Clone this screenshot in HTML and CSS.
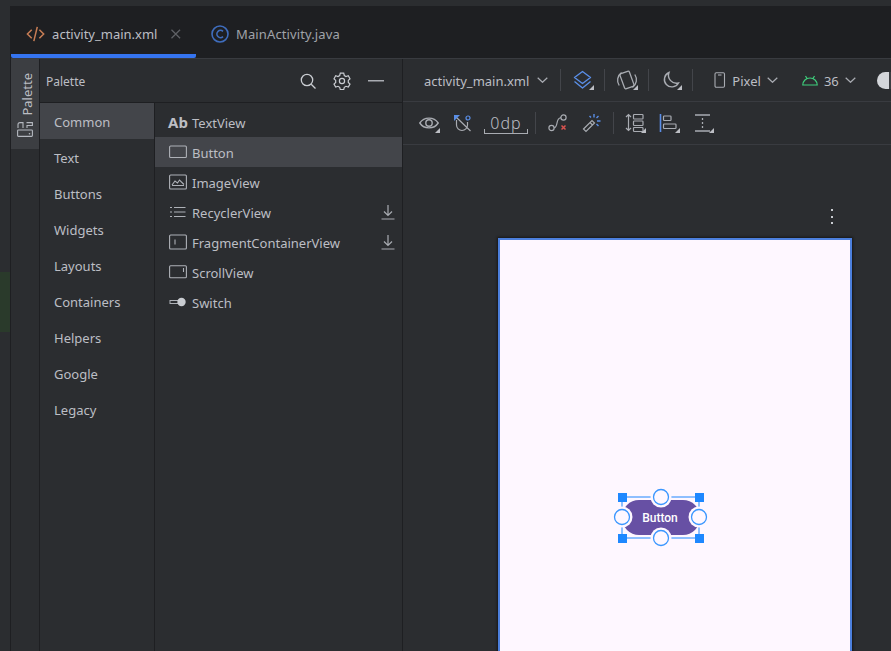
FILE: index.html
```html
<!DOCTYPE html>
<html lang="en">
<head>
    <meta charset="UTF-8">
    <meta name="viewport" content="width=device-width, initial-scale=1.0">
    <title>activity_main.xml</title>
    <link rel="stylesheet" href="styles.css">
</head>
<body>
    <div class="top-strip"></div>
    <div class="main">
        <div class="gutter"><div class="gutter-mark"></div></div>
        <div class="editor">
            <div class="tabs">
                <div class="tab active">
                    <svg class="tab-icon" width="20" height="16" viewBox="0 0 20 16" fill="none" stroke="#c77d55" stroke-width="1.6"><path d="M6 3.500 1.500 8 6 12.500M14 3.500 18.500 8 14 12.500M11.800 .5 8.200 15.500"/></svg>
                    <span>activity_main.xml</span>
                    <svg class="tab-close" width="10" height="10" viewBox="0 0 10 10" stroke="#5f6166" stroke-width="1.300"><path d="M.5.5l9 9M9.500.5l-9 9"/></svg>
                </div>
                <div class="tab">
                    <svg class="tab-icon" width="18" height="18" viewBox="0 0 18 18" fill="none" stroke="#3f6dbd" stroke-width="1.600"><circle cx="9" cy="9" r="8"/><path d="M12 6.400A3.600 3.600 0 1 0 12 11.600"/></svg>
                    <span class="tab-name">MainActivity.java</span>
                </div>
            </div>
            <div class="body">
                <div class="side-strip">
                    <div class="side-button">
                        <span class="side-label">Palette</span>
                        <svg width="16" height="15" viewBox="0 0 16 15" fill="none" stroke="#b4b8bf" stroke-width="1.100"><rect x=".6" y="8" width="14.800" height="6.400" rx=".8"/><path d="M1 6V2.500Q1 .6 3 .6H6V6M9.500 .6H15.400V3.500H10V6"/><circle cx="12.500" cy="11.800" r=".8" fill="#b4b8bf" stroke="none"/></svg>
                    </div>
                </div>
                <div class="palette">
                    <div class="palette-head">
                        <span>Palette</span>
                        <div class="head-icons">
                            <svg width="16" height="16" viewBox="0 0 16 16" fill="none" stroke="#c9ccd1" stroke-width="1.300"><circle cx="7" cy="7" r="5.700"/><path d="m11.200 11.200 4.300 4.300"/></svg>
                            <svg width="18" height="18" viewBox="0 0 18 18" fill="none" stroke="#c9ccd1" stroke-width="1.200"><path d="M7.300 1.200h3.400l.6 2.300 1.700 1 2.300-.7 1.700 3-1.700 1.600v2l1.700 1.600-1.700 3-2.300-.7-1.700 1-.6 2.300H7.300l-.6-2.300-1.700-1-2.300.7-1.700-3 1.700-1.600v-2L1 6.800l1.700-3 2.300.7 1.700-1z"/><circle cx="9" cy="9" r="2.600"/></svg>
                            <svg width="16" height="2" viewBox="0 0 16 2"><rect width="16" height="1.500" fill="#a9acb2"/></svg>
                        </div>
                    </div>
                    <div class="palette-body">
                        <ul class="categories">
                            <li class="selected">Common</li>
                            <li>Text</li>
                            <li>Buttons</li>
                            <li>Widgets</li>
                            <li>Layouts</li>
                            <li>Containers</li>
                            <li>Helpers</li>
                            <li>Google</li>
                            <li>Legacy</li>
                        </ul>
                        <ul class="widgets">
                            <li><span class="ab">Ab</span><span class="name">TextView</span></li>
                            <li class="selected">
                                <svg width="18" height="14" viewBox="0 0 18 14" fill="none" stroke="#aeb1b7" stroke-width="1.100"><rect x=".6" y="1" width="16.800" height="11.500" rx="1"/></svg><span class="name">Button</span></li>
                            <li>
                                <svg width="18" height="16" viewBox="0 0 18 16" fill="none" stroke="#aeb1b7" stroke-width="1.100"><rect x=".6" y="1" width="16.800" height="14" rx="1"/><path d="M3 11.500h12M3 11l3-4 2.500 2 2-3 4.500 4.500"/></svg><span class="name">ImageView</span></li>
                            <li>
                                <svg width="18" height="12" viewBox="0 0 18 12" fill="none" stroke="#aeb1b7" stroke-width="1.200"><path d="M1 1.500h2M5 1.500h11.500M1 6h2M5 6h11.500M1 10.500h2M5 10.500h11.500"/></svg><span class="name">RecyclerView</span><svg class="download" width="14" height="16" viewBox="0 0 14 16" fill="none" stroke="#a9acb2" stroke-width="1.200"><path d="M7 1v10M3 7.500 7 11.500l4-4M.5 15h13"/></svg></li>
                            <li>
                                <svg width="18" height="16" viewBox="0 0 18 16" fill="none" stroke="#aeb1b7" stroke-width="1.100"><rect x=".6" y="1" width="16.800" height="14" rx="1"/><path d="M6 5.500v5"/></svg><span class="name">FragmentContainerView</span><svg class="download" width="14" height="16" viewBox="0 0 14 16" fill="none" stroke="#a9acb2" stroke-width="1.200"><path d="M7 1v10M3 7.500 7 11.500l4-4M.5 15h13"/></svg></li>
                            <li>
                                <svg width="18" height="14" viewBox="0 0 18 14" fill="none" stroke="#aeb1b7" stroke-width="1.100"><rect x=".6" y=".8" width="16.800" height="12" rx="1"/><path d="M14.500 3v4"/></svg><span class="name">ScrollView</span></li>
                            <li>
                                <svg width="18" height="10" viewBox="0 0 18 10"><rect x="1" y="3.500" width="10" height="3" fill="none" stroke="#aeb1b7"/><circle cx="12.500" cy="5" r="4.200" fill="#c9ccd1"/></svg><span class="name">Switch</span></li>
                        </ul>
                    </div>
                </div>
                <div class="design">
                    <div class="toolbar toolbar-top">
                        <div class="tool-text file-pick"><span class="name">activity_main.xml</span>
                            <svg class="chev" width="11" height="6" viewBox="0 0 11 6" fill="none" stroke="#a9acb2" stroke-width="1.200"><path d="m.7.7 4.800 4.600L10.300.7"/></svg></div>
                        <i class="sep"></i>
                        <div class="tool corner">
                            <svg width="20" height="20" viewBox="0 0 20 20" fill="none" stroke="#5a8ee6" stroke-width="1.400" stroke-linejoin="round"><path d="M9.500 1.500 17.500 7.500l-8 6-8-6zM1.500 11.500l8 6.500 8-6.500"/></svg></div>
                        <i class="sep"></i>
                        <div class="tool corner">
                            <svg width="22" height="22" viewBox="0 0 22 22" fill="none" stroke="#a9acb2" stroke-width="1.300"><rect x="6" y="3" width="10" height="16" rx="1.500" transform="rotate(-20 11 11)"/><path d="M3.200 16.500A9.500 9.500 0 0 1 5.500 3.500M18.800 5.500A9.500 9.500 0 0 1 16.500 18.500"/></svg></div>
                        <i class="sep"></i>
                        <div class="tool corner">
                            <svg width="18" height="18" viewBox="0 0 18 18" fill="none" stroke="#a9acb2" stroke-width="1.400"><path d="M7 1.500a7.500 7.500 0 1 0 9.500 10.500 8 8 0 0 1-9.500-10.500z"/></svg></div>
                        <i class="sep"></i>
                        <div class="tool-text pixel">
                            <svg width="12" height="16" viewBox="0 0 12 16" fill="none" stroke="#a9acb2" stroke-width="1.100"><rect x="1" y=".8" width="9.500" height="14.400" rx="1.200"/><path d="M4 3h3.500"/></svg>
                            <span class="name">Pixel</span>
                            <svg class="chev" width="11" height="6" viewBox="0 0 11 6" fill="none" stroke="#a9acb2" stroke-width="1.200"><path d="m.7.7 4.800 4.600L10.300.7"/></svg></div>
                        <div class="tool-text api">
                            <svg width="16" height="11" viewBox="0 0 16 11" fill="none" stroke="#3ecf7c" stroke-width="1.200"><path d="M.8 10a7.200 7 0 0 1 14.400 0zM3.500 1l1.800 3M12.500 1l-1.800 3"/></svg>
                            <span class="name">36</span>
                            <svg class="chev" width="11" height="6" viewBox="0 0 11 6" fill="none" stroke="#a9acb2" stroke-width="1.200"><path d="m.7.7 4.800 4.600L10.300.7"/></svg></div>
                        <div class="theme-dot"></div>
                    </div>
                    <div class="toolbar toolbar-second">
                        <div class="tool corner">
                            <svg width="20" height="14" viewBox="0 0 20 14" fill="none" stroke="#a9acb2" stroke-width="1.400"><path d="M.8 7C5 .5 15 .5 19.200 7 15 13.500 5 13.500.8 7z"/><circle cx="10" cy="7" r="3.200"/></svg></div>
                        <div class="tool">
                            <svg width="18" height="17" viewBox="0 0 18 17" fill="none" stroke="#a9acb2" stroke-width="1.200"><path d="M2.500 5v5a5.500 5.500 0 0 0 11 0V7M1 1 16.500 16"/><path d="M0 0h6L0 6z" fill="#5a8ee6" stroke="none"/><circle cx="14" cy="3" r="2" stroke="#5a8ee6"/></svg></div>
                        <div class="margin-box">0dp</div>
                        <i class="sep sep-tight"></i>
                        <div class="tool">
                            <svg width="20" height="18" viewBox="0 0 20 18" fill="none" stroke="#a9acb2" stroke-width="1.200"><circle cx="3.500" cy="14" r="2.600"/><circle cx="15.500" cy="3.500" r="2.600"/><path d="M6 14c2-.5 2.500-2 3-5s1.500-5 4-5.500"/><path d="m13.500 11.500 4 4M17.500 11.500l-4 4" stroke="#d9534f" stroke-width="1.500"/></svg></div>
                        <div class="tool">
                            <svg width="20" height="20" viewBox="0 0 20 20" fill="none" stroke="#a9acb2" stroke-width="1.200"><path d="M1.500 16 10 7.500l2.500 2.500L4 18.500zM8 9.500l2.500 2.500"/><path d="M12 1v3.500M18.500 8H15M16.500 3 14.500 5M16.500 13l-2-2M7.500 3l1.500 1.500" stroke="#5a8ee6" stroke-width="1.400"/></svg></div>
                        <i class="sep"></i>
                        <div class="tool corner">
                            <svg width="20" height="20" viewBox="0 0 20 20" fill="none" stroke="#a9acb2" stroke-width="1.200"><path d="M3.500 1.500v16M1 4l2.500-2.500L6 4M1 15l2.500 2.500L6 15"/><rect x="8.500" y="1.500" width="9.500" height="4.500" rx=".8"/><rect x="8.500" y="8" width="9.500" height="4.500" rx=".8"/><rect x="8.500" y="14.500" width="9.500" height="4" rx=".8"/></svg></div>
                        <div class="tool corner">
                            <svg width="20" height="20" viewBox="0 0 20 20" fill="none" stroke="#a9acb2" stroke-width="1.200"><path d="M1.500 1v18" stroke="#5a8ee6" stroke-width="1.600"/><rect x="4.500" y="3" width="7.500" height="4.500" rx=".8"/><rect x="4.500" y="11" width="12.500" height="4.500" rx=".8"/></svg></div>
                        <div class="tool corner">
                            <svg width="20" height="20" viewBox="0 0 20 20" fill="none" stroke="#a9acb2" stroke-width="1.300"><path d="M2 2h15M2 18h15M9.500 5v2M9.500 9v2M9.500 13v2"/></svg></div>
                    </div>
                    <div class="canvas">
                        <div class="more"><i></i><i></i><i></i></div>
                        <div class="device">
                            <div class="widget">
                                <svg class="widget-art" width="100" height="65" viewBox="0 0 100 65">
                                    <rect x="12" y="15" width="78" height="35" rx="17" fill="#6750a4"/>
                                    <rect x="12" y="12" width="77" height="41" fill="none" stroke="#1e88ff" stroke-width="1"/>
                                    <g fill="#fef7ff">
                                        <circle cx="51" cy="12" r="10.500"/>
                                        <circle cx="51" cy="53" r="10.500"/>
                                        <circle cx="12" cy="32" r="10.500"/>
                                        <circle cx="89" cy="32" r="10.500"/>
                                    </g>
                                    <g fill="#fef7ff" stroke="#3a96ff" stroke-width="1.300">
                                        <circle cx="51" cy="12" r="7.500"/>
                                        <circle cx="51" cy="53" r="7.500"/>
                                        <circle cx="12" cy="32" r="7.500"/>
                                        <circle cx="89" cy="32" r="7.500"/>
                                    </g>
                                    <g fill="#1e88ff">
                                        <rect x="8" y="8" width="9" height="9"/>
                                        <rect x="85" y="8" width="9" height="9"/>
                                        <rect x="8" y="49" width="9" height="9"/>
                                        <rect x="85" y="49" width="9" height="9"/>
                                    </g>
                                </svg>
                                <span class="widget-label">Button</span>
                            </div>
                        </div>
                    </div>
                </div>
            </div>
        </div>
    </div>
</body>
</html>
```

FILE: styles.css
```css
* {
    box-sizing: border-box;
}
body {
    margin: 0;
    width: 891px;
    height: 651px;
    overflow: hidden;
    display: flex;
    flex-direction: column;
    background-color: #2b2d30;
    color: #bcbec4;
    font-family: "Noto Sans", Arial, sans-serif;
    font-size: 13px;
}
ul {
    list-style: none;
    margin: 0;
    padding: 0;
}
.top-strip {
    height: 6px;
    background-color: #2b2d30;
}
.main {
    flex: 1;
    display: flex;
    min-height: 0;
}
.gutter {
    width: 11px;
    padding-top: 266px;
    background-color: #2b2d30;
    border-right: 1px solid #1e1f22;
}
.gutter-mark {
    width: 10px;
    height: 60px;
    background-color: #2a3a2b;
}
.editor {
    flex: 1;
    display: flex;
    flex-direction: column;
    min-width: 0;
}
.tabs {
    height: 53px;
    display: flex;
    background-color: #1e1f22;
    border-bottom: 1px solid #393b40;
}
.tab {
    display: flex;
    align-items: center;
    height: 52px;
    padding: 4px 15px 0;
    gap: 7px;
    color: #a0a3a9;
}
.tab-name {
    letter-spacing: .12px;
}
.tab.active {
    width: 185px;
    padding-top: 8px;
    border-bottom: 4px solid #3574f0;
    border-radius: 0 0 2px 2px;
    color: #bcbec4;
}
.tab.active .tab-close {
    margin-left: 7px;
}
.body {
    flex: 1;
    display: flex;
    min-height: 0;
}
.side-strip {
    width: 29px;
    background-color: #2b2d30;
    border-right: 1px solid #1e1f22;
}
.side-button {
    height: 90px;
    width: 28px;
    background-color: #3c3e42;
    display: flex;
    flex-direction: column;
    align-items: center;
    justify-content: flex-end;
    gap: 6px;
    padding-bottom: 12px;
}
.side-label {
    writing-mode: vertical-rl;
    transform: rotate(180deg);
    margin-left: 3px;
    font-size: 13px;
}
.palette {
    width: 363px;
    display: flex;
    flex-direction: column;
    border-right: 1px solid #1e1f22;
}
.palette-head {
    height: 44px;
    display: flex;
    align-items: center;
    justify-content: space-between;
    padding: 0 18px 0 6px;
    font-size: 12px;
    border-bottom: 1px solid #1e1f22;
}
.palette-head > span {
    padding-top: 2px;
}
.head-icons {
    display: flex;
    align-items: center;
    gap: 17px;
}
.palette-body {
    flex: 1;
    display: flex;
}
.categories {
    width: 115px;
    border-right: 1px solid #1e1f22;
}
.categories li {
    height: 36px;
    display: flex;
    align-items: center;
    padding: 2px 0 0 14px;
}
.categories li.selected,
.widgets li.selected {
    background-color: #43454a;
}
.widgets {
    flex: 1;
    padding-top: 4px;
}
.widgets li {
    height: 30px;
    display: flex;
    align-items: center;
    gap: 5px;
    padding: 0 7px 0 14px;
}
.name {
    padding-top: 2px;
}
.ab {
    width: 19px;
    margin-left: -1px;
    font-weight: 700;
    font-size: 15px;
}
.download {
    margin-left: auto;
}
.design {
    flex: 1;
    display: flex;
    flex-direction: column;
    min-width: 0;
}
.toolbar {
    display: flex;
    align-items: center;
    flex-shrink: 0;
    border-bottom: 1px solid #393b40;
}
.toolbar-top {
    height: 43px;
    padding-left: 21px;
    overflow: hidden;
}
.toolbar-second {
    height: 43px;
    padding-left: 13px;
    gap: 8px;
}
.tool-text {
    display: flex;
    align-items: center;
    gap: 6px;
    flex-shrink: 0;
}
.file-pick {
    gap: 8px;
    margin-right: 12px;
}
.sep {
    display: block;
    width: 1px;
    height: 22px;
    flex-shrink: 0;
    background-color: #43454a;
}
.sep-tight {
    margin: 0 1px 0 -1px;
}
.tool {
    position: relative;
    display: flex;
    align-items: center;
    justify-content: center;
    flex-shrink: 0;
    width: 26px;
    height: 26px;
}
.toolbar-top .tool {
    width: 43px;
}
.corner::after {
    content: "";
    position: absolute;
    right: 2px;
    bottom: 3px;
    border-style: solid;
    border-width: 0 0 5px 5px;
    border-color: transparent transparent #bcbec4 transparent;
}
.toolbar-top .corner::after {
    right: 10px;
}
.pixel {
    margin-left: 21px;
}
.api {
    margin-left: 24px;
}
.theme-dot {
    width: 24px;
    height: 17px;
    flex-shrink: 0;
    margin-left: 21px;
    border-radius: 9px;
    background: linear-gradient(90deg, #d4d6da 50%, #3c3e42 50%);
}
.margin-box {
    position: relative;
    flex-shrink: 0;
    width: 44px;
    height: 22px;
    text-align: center;
    line-height: 23px;
    font-size: 16px;
    font-weight: 300;
    letter-spacing: 1px;
    border-bottom: 1px solid #a9acb2;
}
.margin-box::before,
.margin-box::after {
    content: "";
    position: absolute;
    bottom: -1px;
    width: 1px;
    height: 5px;
    background-color: #a9acb2;
}
.margin-box::before {
    left: 0;
}
.margin-box::after {
    right: 0;
}
.canvas {
    flex: 1;
    min-height: 0;
    overflow: hidden;
    padding: 93px 0 0 95px;
    position: relative;
}
.more {
    position: absolute;
    left: 428px;
    top: 64px;
    display: flex;
    flex-direction: column;
    gap: 4.5px;
}
.more i {
    display: block;
    width: 2px;
    height: 2px;
    background-color: #c9ccd1;
}
.device {
    position: relative;
    width: 354px;
    height: 500px;
    background-color: #fef7ff;
    border: 2px solid #4c7fdc;
    box-shadow: 0 0 2px 1px #17181a;
}
.widget {
    position: absolute;
    left: 110px;
    top: 245px;
    width: 100px;
    height: 65px;
}
.widget-art {
    display: block;
}
.widget-label {
    position: absolute;
    left: 0;
    right: 0;
    top: 25px;
    text-align: center;
    color: #fff;
    font-family: Roboto, Arial, sans-serif;
    font-size: 12px;
    font-weight: 500;
    line-height: 16px;
}
```
